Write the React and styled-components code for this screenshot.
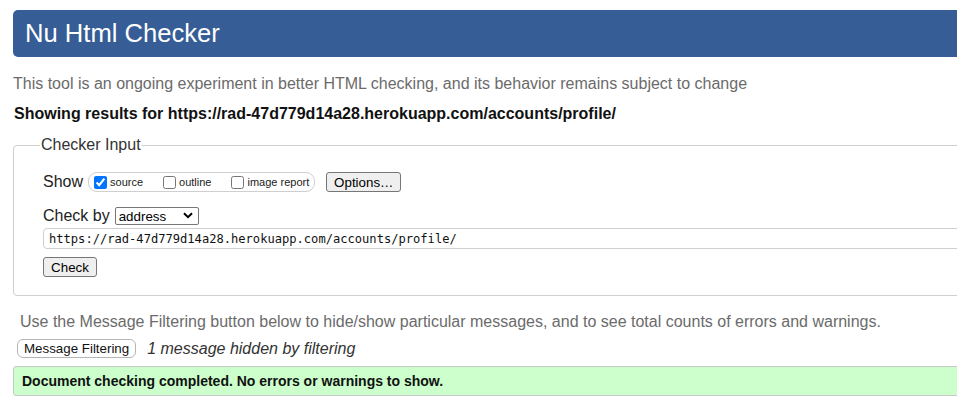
import React from 'react';
import styled, { createGlobalStyle } from 'styled-components';

const GlobalStyle = createGlobalStyle`
  html, body {
    margin: 0;
    padding: 0;
    overflow: hidden;
    background: #fff;
  }
  body {
    font-family: "Liberation Sans", Arial, sans-serif;
    color: #222;
  }
`;

const Page = styled.div`
  width: 1150px;
  padding: 10px 0 0 13px;
  display: flex;
  flex-direction: column;
`;

const Header = styled.header`
  height: 47px;
  background-color: #365d95;
  border-radius: 5px;
  display: flex;
  align-items: center;
  padding-left: 12px;
`;

const Title = styled.h1`
  margin: 0;
  color: #fff;
  font-size: 25.6px;
  font-weight: normal;
  line-height: 1;
`;

const Intro = styled.p`
  margin: 18px 0 0;
  font-size: 16px;
  line-height: 18px;
  color: #6b6b6b;
`;

const ResultsFor = styled.p`
  margin: 12px 0 0 1px;
  font-size: 16px;
  line-height: 18px;
  font-weight: bold;
  color: #111;
`;

const Fieldset = styled.fieldset`
  margin: 13px 0 0;
  border: 1px solid #cfcfcf;
  border-radius: 4px;
  padding: 18px 0 18px 29px;
  display: flex;
  flex-direction: column;
  align-items: flex-start;
  min-width: 0;
`;

const Legend = styled.legend`
  font-size: 16px;
  line-height: 18px;
  color: #333;
  padding: 0 1px;
  margin-left: -3px;
`;

const Row = styled.div`
  display: flex;
  align-items: center;
  height: 20px;
  margin-top: ${p => p.gap || 0}px;
`;

const Label = styled.span`
  font-size: 16px;
  color: #222;
  margin-right: ${p => p.space || 5}px;
`;

const ToggleGroup = styled.span`
  display: inline-flex;
  align-items: center;
  height: 18px;
  border: 1px solid #cfcfcf;
  border-radius: 9px;
  padding: 0 5px;
  margin-right: 11px;
`;

const Toggle = styled.label`
  display: inline-flex;
  align-items: center;
  font-size: 11px;
  color: #222;
  margin-right: ${p => p.last ? 0 : 20}px;

  input {
    width: 13px;
    height: 13px;
    margin: 0 3px 0 0;
    accent-color: #0075ff;
  }
`;

const Button = styled.button`
  font-family: "Liberation Sans", Arial, sans-serif;
  font-size: 13.33px;
  color: #000;
  background: #efefef;
  border: 1px solid #767676;
  border-radius: 3px;
  height: 20px;
  padding: 0 6px;
  width: ${p => p.w ? `${p.w}px` : 'auto'};
`;

const SelectWrap = styled.span`
  position: relative;
  display: inline-flex;
`;

const Select = styled.select`
  appearance: none;
  width: 84px;
  height: 18px;
  border: 1px solid #767676;
  border-radius: 2px;
  background: #fff;
  font-family: "Liberation Sans", Arial, sans-serif;
  font-size: 13.33px;
  color: #000;
  padding: 0 0 0 3px;
`;

const Chevron = styled.svg`
  position: absolute;
  right: 6px;
  top: 5px;
  pointer-events: none;
`;

const UrlInput = styled.input`
  width: 1080px;
  height: 21px;
  box-sizing: border-box;
  margin-top: 2px;
  border: 1px solid #cfcfcf;
  border-radius: 4px;
  padding: 0 5px;
  font-family: "DejaVu Sans Mono", "Liberation Mono", monospace;
  font-size: 12.1px;
  color: #111;
`;

const Hint = styled.p`
  margin: 17px 0 0 7px;
  font-size: 16px;
  line-height: 18px;
  color: #6b6b6b;
`;

const FilterRow = styled.div`
  display: flex;
  align-items: center;
  margin: 8px 0 0 4px;
`;

const FilterButton = styled.button`
  font-family: "Liberation Sans", Arial, sans-serif;
  font-size: 13.33px;
  color: #111;
  background: #fff;
  border: 1px solid #b5b5b5;
  border-radius: 6px;
  height: 19px;
  padding: 0 6px;
  margin-right: 11px;
`;

const Hidden = styled.em`
  font-size: 16px;
  color: #333;
`;

const Success = styled.p`
  margin: 8px 0 0;
  background: #ccffcc;
  border: 1px solid #c8c8c8;
  border-radius: 3px;
  padding: 6px 8px 6px 8px;
  font-size: 14px;
  line-height: 16px;
  font-weight: bold;
  color: #111;
`;

const url = 'https://rad-47d779d14a28.herokuapp.com/accounts/profile/';

export default function App() {
  return (
    <>
      <GlobalStyle />
      <Page>
        <Header>
          <Title>Nu Html Checker</Title>
        </Header>
        <Intro>
          This tool is an ongoing experiment in better HTML checking, and its behavior remains subject to change
        </Intro>
        <ResultsFor>Showing results for {url}</ResultsFor>

        <Fieldset>
          <Legend>Checker Input</Legend>
          <Row>
            <Label>Show</Label>
            <ToggleGroup>
              <Toggle>
                <input type="checkbox" defaultChecked />
                source
              </Toggle>
              <Toggle>
                <input type="checkbox" />
                outline
              </Toggle>
              <Toggle last>
                <input type="checkbox" />
                image report
              </Toggle>
            </ToggleGroup>
            <Button w={75}>Options…</Button>
          </Row>
          <Row gap={14}>
            <Label space={5}>Check by</Label>
            <SelectWrap>
              <Select defaultValue="address">
                <option value="address">address</option>
                <option value="upload">file upload</option>
                <option value="text">text input</option>
              </Select>
              <Chevron width="10" height="7" viewBox="0 0 10 7">
                <path d="M1 1.2 L5 5.2 L9 1.2" fill="none" stroke="#000" strokeWidth="2" />
              </Chevron>
            </SelectWrap>
          </Row>
          <UrlInput defaultValue={url} />
          <Row gap={8}>
            <Button w={54}>Check</Button>
          </Row>
        </Fieldset>

        <Hint>
          Use the Message Filtering button below to hide/show particular messages, and to see total counts of errors and warnings.
        </Hint>
        <FilterRow>
          <FilterButton>Message Filtering</FilterButton>
          <Hidden>1 message hidden by filtering</Hidden>
        </FilterRow>
        <Success>Document checking completed. No errors or warnings to show.</Success>
      </Page>
    </>
  );
}
